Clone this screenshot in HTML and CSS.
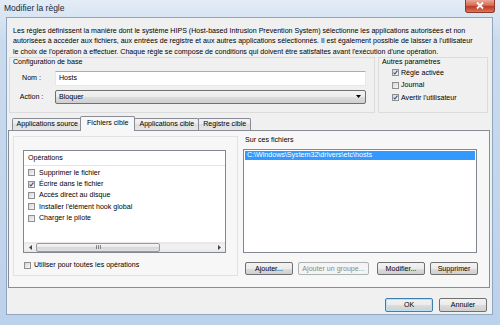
FILE: index.html
```html
<!DOCTYPE html>
<html lang="fr">
<head>
    <meta charset="UTF-8">
    <meta name="viewport" content="width=device-width, initial-scale=1.0">
    <title>Modifier la règle</title>
    <link rel="stylesheet" href="styles.css">
</head>
<body>
    <div class="window">
        <div class="titlebar">
            <span class="title">Modifier la règle</span>
            <span class="close">
                <svg width="30" height="13" viewBox="0 0 30 13">
                    <path d="M12 3.5 L18 9.5 M18 3.5 L12 9.5" stroke="#fff" stroke-width="1.8" fill="none"/>
                </svg>
            </span>
        </div>

        <div class="client">
            <p class="intro">
                Les règles définissent la manière dont le système HIPS (Host-based Intrusion Prevention System) sélectionne les applications autorisées et non<br>
                autorisées à accéder aux fichiers, aux entrées de registre et aux autres applications sélectionnés. Il est également possible de laisser à l'utilisateur<br>
                le choix de l'opération à effectuer. Chaque règle se compose de conditions qui doivent être satisfaites avant l'exécution d'une opération.
            </p>

            <div class="top">
                <div class="group base">
                    <div class="legend">Configuration de base</div>
                    <div class="field">
                        <label>Nom :</label>
                        <div class="input">Hosts</div>
                    </div>
                    <div class="field">
                        <label>Action :</label>
                        <div class="select">
                            <span>Bloquer</span>
                            <svg width="5" height="3" viewBox="0 0 5 3"><polygon points="0,0 5,0 2.5,3" fill="#000"/></svg>
                        </div>
                    </div>
                </div>
                <div class="group other">
                    <div class="legend">Autres paramètres</div>
                    <div class="check"><span class="cb on"></span>Règle activée</div>
                    <div class="check"><span class="cb"></span>Journal</div>
                    <div class="check"><span class="cb on"></span>Avertir l'utilisateur</div>
                </div>
            </div>

            <div class="tabs">
                <div class="tab">Applications source</div>
                <div class="tab active">Fichiers cible</div>
                <div class="tab">Applications cible</div>
                <div class="tab">Registre cible</div>
            </div>

            <div class="panel">
                <div class="group ops-group">
                    <div class="listbox ops">
                        <div class="list-head">Opérations</div>
                        <div class="row"><span class="cb"></span>Supprimer le fichier</div>
                        <div class="row"><span class="cb on"></span>Écrire dans le fichier</div>
                        <div class="row"><span class="cb"></span>Accès direct au disque</div>
                        <div class="row"><span class="cb"></span>Installer l'élément hook global</div>
                        <div class="row"><span class="cb"></span>Charger le pilote</div>
                        <div class="hscroll">
                            <span class="arrow">
                                <svg width="3" height="5" viewBox="0 0 3 5"><polygon points="3,0 3,5 0,2.5" fill="#444"/></svg>
                            </span>
                            <span class="thumb">
                                <svg width="5" height="4" viewBox="0 0 5 4"><path d="M0.5 0 V4 M2.5 0 V4 M4.5 0 V4" stroke="#6a6a6a" stroke-width="0.8"/></svg>
                            </span>
                            <span class="arrow right">
                                <svg width="3" height="5" viewBox="0 0 3 5"><polygon points="0,0 0,5 3,2.5" fill="#444"/></svg>
                            </span>
                        </div>
                    </div>
                    <div class="check all"><span class="cb"></span>Utiliser pour toutes les opérations</div>
                </div>

                <div class="files">
                    <div class="legend">Sur ces fichiers</div>
                    <div class="listbox file-list">
                        <div class="sel">C:\Windows\System32\drivers\etc\hosts</div>
                    </div>
                    <div class="btnrow">
                        <button class="btn">Ajouter...</button>
                        <button class="btn wide" disabled>Ajouter un groupe...</button>
                        <button class="btn gap">Modifier...</button>
                        <button class="btn">Supprimer</button>
                    </div>
                </div>
            </div>

            <div class="footer">
                <button class="btn ok">OK</button>
                <button class="btn">Annuler</button>
            </div>
        </div>
    </div>
</body>
</html>
```

FILE: styles.css
```css
* {
    box-sizing: border-box;
}

body {
    margin: 0;
    font-family: "Liberation Sans", Arial, sans-serif;
    font-size: 7.1px;
    color: #000;
}

.window {
    width: 500px;
    height: 325px;
    display: flex;
    flex-direction: column;
    background: linear-gradient(to bottom, #e3ecf6 0, #cbdbee 40px, #bcd1ea 100%);
}

.titlebar {
    height: 17px;
    display: flex;
    align-items: flex-start;
    padding: 0 5px 0 4px;
}

.title {
    line-height: 17px;
    font-size: 8.5px;
    color: #1b2533;
}

.close {
    margin-left: auto;
    width: 30px;
    height: 13px;
    border: 1px solid #8b3a2c;
    border-top: none;
    border-radius: 0 0 3px 3px;
    background: linear-gradient(to bottom, #e9a897 0, #d46a55 45%, #bf3a22 55%, #d9785c 100%);
}

.close svg {
    display: block;
    margin: -1px 0 0 -1px;
}

.client {
    flex: 1;
    margin: 0 7px 10px 6px;
    border: 1px solid #8fa6c1;
    background: #f0f0f0;
}

.intro {
    margin: 0;
    padding: 7.5px 0 0 6px;
    line-height: 10.5px;
    white-space: nowrap;
}

.top {
    display: flex;
    gap: 3px;
    height: 56px;
    padding-left: 2px;
}

.group {
    border: 1px solid #dcdcdc;
}

.legend {
    line-height: 7.5px;
}

.base {
    width: 366px;
    padding-top: 1px;
}

.base .legend {
    padding-left: 3px;
}

.field {
    display: flex;
    align-items: center;
    margin-top: 4px;
}

.field:first-of-type {
    margin-top: 5px;
}

.field label {
    width: 43px;
    margin-right: 2px;
    text-align: center;
}

.input {
    width: 311px;
    height: 15px;
    line-height: 13px;
    padding-left: 3px;
    background: #fff;
    border: 1px solid #e3e9ef;
    border-top-color: #abadb3;
}

.select {
    width: 311px;
    height: 14px;
    display: flex;
    align-items: center;
    padding: 0 4px 0 3px;
    border: 1px solid #707070;
    border-radius: 2px;
    background: linear-gradient(to bottom, #f2f2f2 0, #ebebeb 50%, #dddddd 50%, #cfcfcf 100%);
}

.select svg {
    margin-left: auto;
}

.other {
    width: 110px;
    padding: 1px 0 0 3px;
}

.check {
    display: flex;
    align-items: center;
    height: 12.5px;
}

.other .check {
    padding-left: 10px;
}

.other .check:first-of-type {
    margin-top: 5.5px;
}

.cb {
    width: 7px;
    height: 7px;
    margin-right: 2px;
    border: 1px solid #8e8f8f;
    background: linear-gradient(135deg, #d3d6db 0, #f7f7f7 100%);
    flex: none;
}

.cb.on {
    background: url("data:image/svg+xml;utf8,<svg xmlns='http://www.w3.org/2000/svg' width='5' height='5' viewBox='0 0 5 5'><path d='M0.6 2.6 L1.9 4 L4.4 0.6' stroke='%23384f8c' stroke-width='1.1' fill='none'/></svg>") no-repeat center, linear-gradient(135deg, #d3d6db 0, #f7f7f7 100%);
}

.tabs {
    display: flex;
    align-items: flex-end;
    height: 14px;
    margin: 3px 0 0 1px;
    padding-left: 3.5px;
}

.tab {
    height: 12px;
    line-height: 11px;
    padding: 0 4px;
    margin-right: -1px;
    border: 1px solid #898c95;
    border-bottom: none;
    border-radius: 2px 2px 0 0;
    background: linear-gradient(to bottom, #f3f3f3 0, #ebebeb 50%, #dedede 50%, #e6e6e6 100%);
}

.tab.active {
    position: relative;
    z-index: 1;
    height: 15px;
    margin: 0 -1px -1px -2px;
    padding: 0 6px;
    line-height: 13px;
    background: #f7f7f7;
}

.panel {
    display: flex;
    height: 158px;
    margin: 0 2px 0 1px;
    padding: 5px 4px 0 4px;
    border: 1px solid #898c95;
    background: #f7f7f7;
}

.ops-group {
    width: 225px;
    height: 140px;
    padding: 13px 11px 0 9px;
    border-color: #e2e2e2;
}

.listbox {
    background: #fff;
    border: 1px solid #828790;
}

.ops {
    height: 103px;
    display: flex;
    flex-direction: column;
}

.list-head {
    height: 15px;
    line-height: 15px;
    padding-left: 4px;
    margin-bottom: 1px;
    border-bottom: 1px solid #e5e5e5;
}

.row {
    display: flex;
    align-items: center;
    height: 11.4px;
    padding-left: 4px;
}

.row .cb {
    margin-right: 4px;
}

.hscroll {
    display: flex;
    align-items: center;
    height: 10px;
    margin-top: auto;
    background: linear-gradient(to bottom, #e6e6e6 0, #f0f0f0 30%, #f0f0f0 70%, #e6e6e6 100%);
}

.arrow {
    width: 12px;
    display: flex;
    justify-content: center;
}

.arrow.right {
    margin-left: auto;
}

.thumb {
    width: 124px;
    height: 9px;
    display: flex;
    align-items: center;
    justify-content: center;
    border: 1px solid #9a9a9a;
    border-radius: 2px;
    background: linear-gradient(to bottom, #f4f4f4 0, #e8e8e8 50%, #d8d8d8 50%, #e0e0e0 100%);
}

.check.all {
    height: 7.5px;
    margin-top: 8.5px;
    padding-left: 1px;
}

.check.all .cb {
    margin-right: 3px;
}

.files {
    display: flex;
    flex-direction: column;
    margin-left: 5px;
    padding-top: 1px;
}

.files .legend {
    padding-left: 2px;
}

.file-list {
    width: 234px;
    height: 103.5px;
    margin-top: 4.5px;
    padding: 1px;
}

.sel {
    height: 8.5px;
    line-height: 8.5px;
    padding-left: 2px;
    background: #3399ff;
    color: #fff;
}

.btnrow {
    display: flex;
    margin-top: 9.5px;
    padding-left: 2px;
}

.btn {
    width: 48px;
    height: 13px;
    padding: 0;
    font-family: inherit;
    font-size: 7.1px;
    color: #000;
    border: 1px solid #707070;
    border-radius: 2px;
    background: linear-gradient(to bottom, #f2f2f2 0, #ebebeb 50%, #dddddd 50%, #cfcfcf 100%);
}

.btnrow .btn + .btn {
    margin-left: 5px;
}

.btnrow .btn.gap {
    margin-left: 8px;
}

.btn.wide {
    width: 71px;
}

.btn:disabled {
    color: #8a8a8a;
    border-color: #adb2b5;
    background: #f4f4f4;
}

.footer {
    display: flex;
    justify-content: flex-end;
    gap: 6px;
    margin-top: 10px;
    padding-right: 5px;
}

.footer .btn {
    height: 14px;
}

.btn.ok {
    border-color: #3c7fb1;
    box-shadow: inset 0 0 0 1px #b6e1f7;
}
```
